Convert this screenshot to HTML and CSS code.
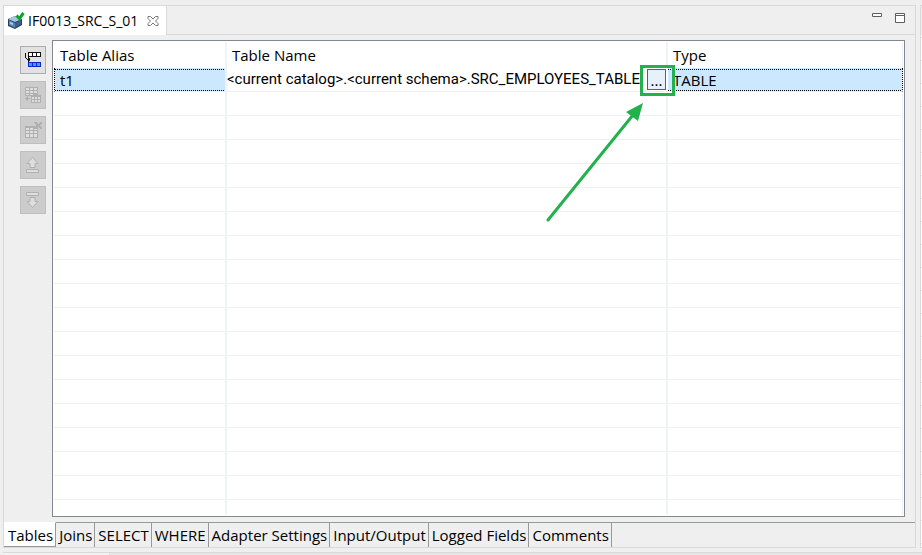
FILE: index.html
```html
<!DOCTYPE html>
<html lang="en">
<head>
<meta charset="utf-8">
<title>IF0013_SRC_S_01</title>
<link rel="stylesheet" href="styles.css">
</head>
<body>
<main class="workbench">
  <section class="editor">
    <header class="editor-bar">
      <div class="editor-tab">
        <svg class="tab-icon" width="18" height="18" viewBox="0 0 18 18" aria-hidden="true">
          <path d="M1 7 8 4l7 3v6l-7 4-7-3z" fill="#26415f"/>
          <path d="M1 7 8 4l7 3-7 3z" fill="#a9c4de"/>
          <path d="M2 8l6 3v5l-6-3z" fill="#5583b5"/>
          <path d="M3 10l3 1v2l-3-1z" fill="#a9cdf0"/>
          <path d="M8 11l6-3v4l-6 4z" fill="#3c608c"/>
          <path d="M9.500 3.500l3 3L16.500 1" fill="none" stroke="#0ba52b" stroke-width="3"/>
        </svg>
        <span class="editor-title">IF0013_SRC_S_01</span>
        <button class="bare" aria-label="Close">
          <svg width="12" height="12" viewBox="0 0 12 12"><path d="M1 1.500h2.500L6 4l2.500-2.500H11V3.500L8.500 6 11 8.500v2H8.500L6 8l-2.500 2.500H1v-2L3.500 6 1 3.500z" fill="#fff" stroke="#777"/></svg>
        </button>
      </div>
      <div class="window-tools">
        <button class="bare" aria-label="Minimize">
          <svg width="12" height="12" viewBox="0 0 12 12"><path d="M1.500 1.500h9v3h-9z" fill="#fff" stroke="#5f5f5f"/></svg>
        </button>
        <button class="bare" aria-label="Maximize">
          <svg width="12" height="12" viewBox="0 0 12 12"><path d="M1.500 1.500h9v9h-9zM1.500 3.500h9" fill="#fff" stroke="#5f5f5f"/></svg>
        </button>
      </div>
    </header>

    <div class="editor-body">
      <div class="toolbar">
        <button class="tool" aria-label="Add table">
          <svg width="18" height="18" viewBox="0 0 18 18" shape-rendering="crispEdges">
            <path d="M4 1h13v5H4z" fill="#111"/>
            <path d="M5 2h3v3H5zM9 2h3v3H9zM13 2h3v3h-3z" fill="#fff"/>
            <path d="M1 2h1v5H1zM2 7h1v1H2zM3 8h3v1H3zM4 6h1v5H4zM5 7h1v3H5z" fill="#111"/>
            <path d="M4 11h13v5H4z" fill="#0a28c8"/>
            <path d="M5 12h3v3H5zM9 12h3v3H9zM13 12h3v3h-3z" fill="#3f9bff"/>
          </svg>
        </button>
        <button class="tool" disabled aria-label="Duplicate table">
          <svg width="18" height="18" viewBox="0 0 18 18" shape-rendering="crispEdges">
            <path d="M1 1h13v9H1z" fill="#b0b0b0"/>
            <path d="M2 2h3v2H2zM6 2h3v2H6zM10 2h3v2h-3zM2 5h3v2H2zM6 5h3v2H6zM10 5h3v2h-3zM2 8h3v1H2zM6 8h3v1H6z" fill="#dedede"/>
            <path d="M7 9h10v8H7z" fill="#b0b0b0"/>
            <path d="M8 11h2v2H8zM11 11h2v2h-2zM14 11h2v2h-2zM8 14h2v2H8zM11 14h2v2h-2zM14 14h2v2h-2z" fill="#dedede"/>
            <path d="M1 12h5v1H1zM2 11h2v3H2zM3 10h1v5H3z" fill="#b0b0b0"/>
          </svg>
        </button>
        <button class="tool" disabled aria-label="Remove table">
          <svg width="18" height="18" viewBox="0 0 18 18" shape-rendering="crispEdges">
            <path d="M1 5h13v12H1z" fill="#b0b0b0"/>
            <path d="M2 7h3v2H2zM6 7h3v2H6zM10 7h3v2h-3zM2 10h3v2H2zM6 10h3v2H6zM10 10h3v2h-3zM2 13h3v3H2zM6 13h3v3H6zM10 13h3v3h-3z" fill="#dedede"/>
            <path d="M10 1h2l2 2 2-2h2v2l-2 1 2 3v1h-2l-2-2-2 2h-2V7l2-3-2-2z" fill="#b0b0b0"/>
          </svg>
        </button>
        <button class="tool" disabled aria-label="Move up">
          <svg width="18" height="18" viewBox="0 0 18 18">
            <path d="M8.500 1.500l5.500 6h-3v4h-5v-4H3z" fill="#dedede" stroke="#b0b0b0"/>
            <path d="M2.500 13.500h12v3h-12z" fill="#dedede" stroke="#b0b0b0"/>
          </svg>
        </button>
        <button class="tool" disabled aria-label="Move down">
          <svg width="18" height="18" viewBox="0 0 18 18">
            <path d="M2.500 1.500h12v3h-12z" fill="#dedede" stroke="#b0b0b0"/>
            <path d="M6 6.500h5v4h3l-5.500 6-5.500-6h3z" fill="#dedede" stroke="#b0b0b0"/>
          </svg>
        </button>
      </div>

      <div class="grid-box">
        <table class="grid">
          <colgroup><col class="c-alias"><col class="c-name"><col></colgroup>
          <thead><tr><th>Table Alias</th><th>Table Name</th><th>Type</th></tr></thead>
          <tbody>
            <tr class="selected">
              <td>t1</td>
              <td class="editing">
                <div class="cell-editor">
                  <span class="cell-value">&lt;current catalog&gt;.&lt;current schema&gt;.SRC_EMPLOYEES_TABLE</span>
                  <button class="browse">...</button>
                  <i class="highlight"></i>
                  <svg class="arrow" width="100" height="122" viewBox="0 0 100 122" aria-hidden="true">
                    <path d="M2 117 87 12" stroke="#22b14c" stroke-width="3" stroke-linecap="round"/>
                    <path d="M97 0 80 9 92 18z" fill="#22b14c"/>
                  </svg>
                </div>
              </td>
              <td>TABLE</td>
            </tr>
            <tr><td></td><td></td><td></td></tr>
            <tr><td></td><td></td><td></td></tr>
            <tr><td></td><td></td><td></td></tr>
            <tr><td></td><td></td><td></td></tr>
            <tr><td></td><td></td><td></td></tr>
            <tr><td></td><td></td><td></td></tr>
            <tr><td></td><td></td><td></td></tr>
            <tr><td></td><td></td><td></td></tr>
            <tr><td></td><td></td><td></td></tr>
            <tr><td></td><td></td><td></td></tr>
            <tr><td></td><td></td><td></td></tr>
            <tr><td></td><td></td><td></td></tr>
            <tr><td></td><td></td><td></td></tr>
            <tr><td></td><td></td><td></td></tr>
            <tr><td></td><td></td><td></td></tr>
            <tr><td></td><td></td><td></td></tr>
            <tr><td></td><td></td><td></td></tr>
            <tr class="rest"><td></td><td></td><td></td></tr>
          </tbody>
        </table>
      </div>
    </div>

    <nav class="pages">
      <button class="page current">Tables</button>
      <button class="page">Joins</button>
      <button class="page">SELECT</button>
      <button class="page">WHERE</button>
      <button class="page">Adapter Settings</button>
      <button class="page">Input/Output</button>
      <button class="page">Logged Fields</button>
      <button class="page">Comments</button>
    </nav>
  </section>
  <aside class="side"></aside>
</main>
<footer class="lower"><div class="lower-tab"></div></footer>
</body>
</html>
```
FILE: styles.css
```css
* { box-sizing: border-box; }

body {
  margin: 0;
  height: 100vh;
  display: flex;
  flex-direction: column;
  gap: 4px;
  padding: 5px 0 0 3px;
  overflow: hidden;
  background: #efefef;
  color: #000;
  font: 15px/20px "Open Sans", "Noto Sans", sans-serif;
}

button { font: inherit; color: inherit; padding: 0; }
svg { display: block; }

.bare { border: 0; background: none; }

.workbench { flex: 1; display: flex; gap: 4px; min-height: 0; }

.editor {
  flex: 1;
  min-width: 0;
  display: flex;
  flex-direction: column;
  border: 1px solid #d9d9d9;
}

.editor-bar { display: flex; height: 29px; }

.editor-tab {
  display: flex;
  align-items: center;
  gap: 3px;
  padding: 0 7px 0 3px;
  background: #fff;
  border-right: 1px solid #d9d9d9;
}
.editor-title { margin-right: 6px; font-size: 14px; }

.window-tools {
  flex: 1;
  display: flex;
  justify-content: flex-end;
  align-items: flex-start;
  gap: 11px;
  padding: 6px 9px;
  border-bottom: 1px solid #d9d9d9;
}

.editor-body {
  flex: 1;
  min-height: 0;
  display: flex;
  gap: 6px;
  padding: 5px 10px 5px 16px;
}

.toolbar { display: flex; flex-direction: column; gap: 7px; padding-top: 6px; }

.tool {
  display: grid;
  place-items: center;
  width: 26px;
  height: 28px;
  background: #e1e1e1;
  border: 1px solid #adadad;
}
.tool:disabled { background: #ccc; border-color: #bfbfbf; }

.grid-box {
  flex: 1;
  min-width: 0;
  background: #fff;
  border: 1px solid #828790;
  padding: 1px;
}

.grid { width: 100%; table-layout: fixed; border-collapse: separate; border-spacing: 0; }
.c-alias { width: 173px; }
.c-name { width: 441px; }

.grid th {
  height: 26px;
  padding: 0 5px;
  text-align: left;
  font-weight: 400;
  border-right: 2px solid #eef2f9;
}
.grid th:first-child { padding-left: 6px; }
.grid td {
  height: 24px;
  padding: 0 6px;
  border-right: 2px solid #eef2f9;
  border-bottom: 1px solid #efefef;
}
.grid th:last-child, .grid td:last-child { border-right-width: 1px; }
.grid .rest td { height: 15px; border-bottom: 0; }

.grid .selected td {
  padding: 1px 5px 0;
  background: #cce8ff;
  background-clip: padding-box;
}
.grid .selected td:first-child,
.grid .selected td:last-child {
  background-image:
    repeating-linear-gradient(90deg, #000 0 1px, transparent 1px 2px),
    repeating-linear-gradient(90deg, #000 0 1px, transparent 1px 2px);
  background-size: 100% 1px;
  background-position: 0 1px, 0 100%;
  background-repeat: no-repeat;
}
.grid .selected td:first-child { border-left: 1px dotted #000; }
.grid .selected td:last-child { border-right: 1px dotted #000; }

.grid .selected .editing { padding: 0; background: #fff; border-right: 0; }

.cell-editor {
  position: relative;
  display: flex;
  justify-content: space-between;
  height: 23px;
  white-space: nowrap;
}
.cell-value { font-family: Roboto, "Open Sans", sans-serif; line-height: 22px; }

.browse {
  flex: none;
  width: 19px;
  height: 21px;
  margin: 1px 2px 0 0;
  background: #e5f1fb;
  border: 1px solid #0078d7;
}

.highlight {
  position: absolute;
  right: -7px;
  top: -3px;
  width: 35px;
  height: 31px;
  border: 3px solid #22b14c;
}

.arrow { position: absolute; right: 22px; top: 35px; }

.pages { display: flex; height: 25px; }
.pages::after { content: ""; flex: 1; border-top: 1px solid #999; }

.page {
  padding: 0 2px 1px 3px;
  background: #efefef;
  border: solid #999;
  border-width: 1px 1px 0 0;
}
.page.current { padding: 0 2px 0 4px; background: #fff; border-top-color: #fff; border-bottom: 1px solid #999; }

.side {
  width: 2px;
  border: 1px solid #d9d9d9;
  border-right: 0;
  background:
    linear-gradient(#efefef 29px, transparent 29px),
    repeating-linear-gradient(#fff 0 8px, #e4e4e4 8px 9px, #fff 9px 23px);
}

.lower { height: 3px; border-top: 1px solid #d9d9d9; background: #e6e6e6; }
.lower-tab { width: 107px; height: 2px; background: #f2f2f2; border-right: 1px solid #d9d9d9; }
```
